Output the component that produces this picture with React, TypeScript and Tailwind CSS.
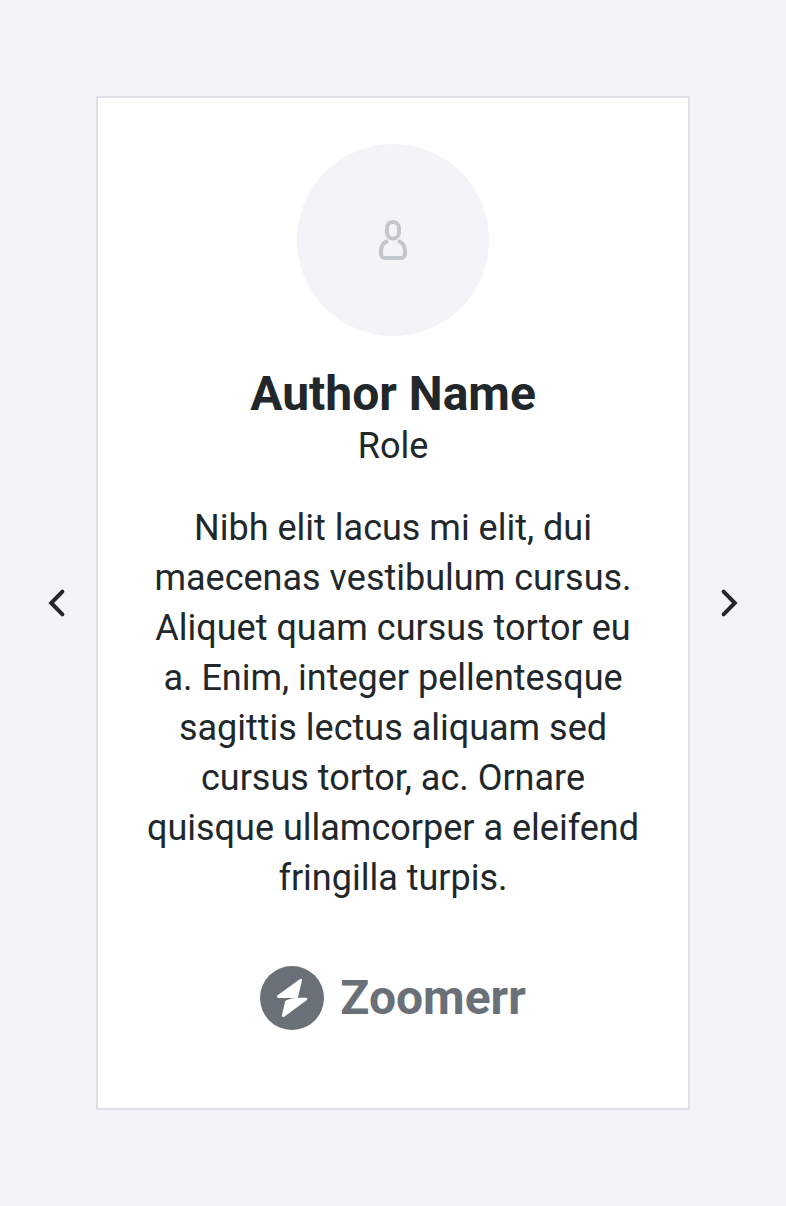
export default function App() {
  return (
    <main className="flex h-[1206px] w-full items-center justify-between bg-[#f2f4f8] px-8 font-['Roboto',sans-serif] text-[#21272a] antialiased">
      <button aria-label="Previous" className="flex h-12 w-12 items-center justify-center">
        <svg width="48" height="48" viewBox="0 0 48 48" fill="none" stroke="currentColor" strokeWidth="4" strokeLinecap="round" strokeLinejoin="miter"><path d="M30.4 12.6L19.2 24l11.2 11.4" /></svg>
      </button>
      <section className="-mx-4 flex h-[1014px] w-[594px] flex-col items-center border-2 border-[#dde1e6] bg-white pt-[46px] text-center">
        <div className="flex h-48 w-48 items-center justify-center rounded-full bg-[#f2f4f8] text-[#c1c7cd]">
          <svg width="48" height="48" viewBox="0 0 48 48" fill="none" stroke="currentColor" strokeWidth="4" strokeLinecap="round" strokeLinejoin="round"><rect x="18" y="6" width="12" height="16.5" rx="6" /><path d="M17.5 25.6C14.2 27.4 12 30.9 12 34.9V38a4 4 0 0 0 4 4h16a4 4 0 0 0 4-4v-3.1c0-4-2.2-7.5-5.5-9.3" /></svg>
        </div>
        <h1 className="mt-[31px] mb-px text-[48px] leading-[53px] font-bold">Author Name</h1>
        <p className="text-[36px] leading-[50px]">Role</p>
        <p className="mt-8 w-[498px] text-[36px] leading-[50px]">Nibh elit lacus mi elit, dui maecenas vestibulum cursus. Aliquet quam cursus tortor eu a. Enim, integer pellentesque sagittis lectus aliquam sed cursus tortor, ac. Ornare quisque ullamcorper a eleifend fringilla turpis.</p>
        <div className="mt-[63px] flex items-center gap-4 text-[#697077]">
          <svg width="64" height="64" viewBox="0 0 64 64"><circle cx="32" cy="32" r="32" fill="currentColor" /><path d="M40.1 12.9Q42.2 12 42 14.3L37.8 32H18.4Q15.8 31 17.6 29.2Z" fill="white" /><path d="M35.5 31.7H46.2Q48.1 32.4 46.6 34.2L24.2 50.8Q22 51.8 21.9 49.4L25 36.1Q25.4 34.6 26.8 34Q30.5 32.6 35.5 31.7Z" fill="white" /></svg>
          <span className="mb-0.5 text-[48px] leading-[53px] font-bold">Zoomerr</span>
        </div>
      </section>
      <button aria-label="Next" className="flex h-12 w-12 items-center justify-center">
        <svg width="48" height="48" viewBox="0 0 48 48" fill="none" stroke="currentColor" strokeWidth="4" strokeLinecap="round" strokeLinejoin="miter"><path d="M17.6 12.6L28.8 24 17.6 35.4" /></svg>
      </button>
    </main>
  );
}
